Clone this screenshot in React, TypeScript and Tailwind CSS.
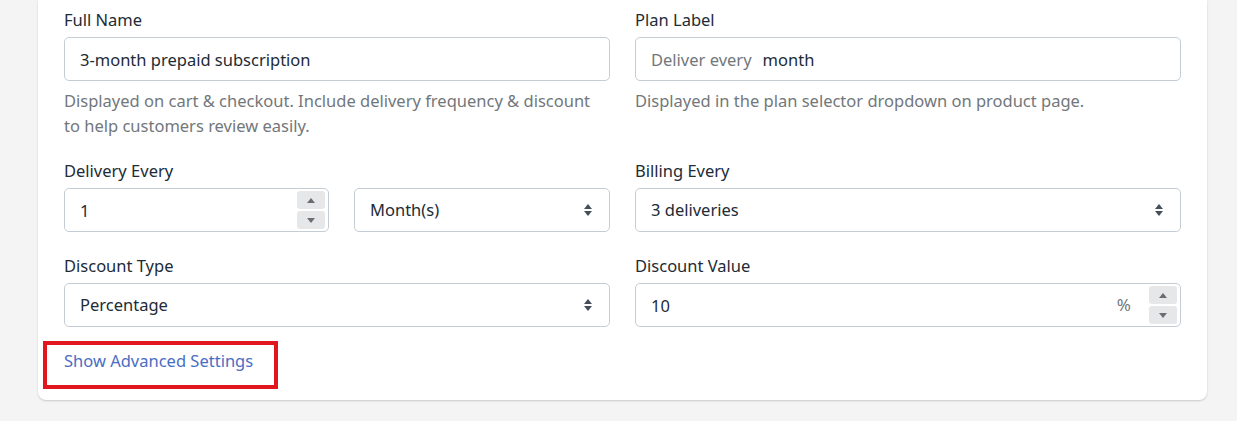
import React from "react";

const font = { fontFamily: '"Segoe UI", "Noto Sans", "Open Sans", sans-serif' };

function Stepper() {
  return (
    <div className="flex flex-col gap-[2px]">
      <div className="flex h-[18px] w-[28px] items-center justify-center rounded-[3px] bg-[#e6e7e9]">
        <svg width="8" height="5" viewBox="0 0 8 5"><path d="M0 5 L4 0 L8 5 Z" fill="#6b6e71" /></svg>
      </div>
      <div className="flex h-[18px] w-[28px] items-center justify-center rounded-[3px] bg-[#e6e7e9]">
        <svg width="8" height="5" viewBox="0 0 8 5"><path d="M0 0 L4 5 L8 0 Z" fill="#6b6e71" /></svg>
      </div>
    </div>
  );
}

function SelectArrows() {
  return (
    <svg width="10" height="14" viewBox="0 0 10 14">
      <path d="M1 6 L5 1 L9 6 Z" fill="#454f5b" />
      <path d="M1 8 L5 13 L9 8 Z" fill="#454f5b" />
    </svg>
  );
}

function Label({ children }: { children: React.ReactNode }) {
  return <div className="mb-[5px] text-[16.5px] leading-[24px] text-[#212b36]">{children}</div>;
}

function Box({ children, right }: { children: React.ReactNode; right?: React.ReactNode }) {
  return (
    <div className="flex h-[44px] items-center rounded-[5px] border border-[#c4cdd5] bg-white pl-[15px] pr-[3px] text-[16.5px] text-[#212b36]">
      <div className="flex-1 pt-[2px]">{children}</div>
      {right}
    </div>
  );
}

function SelectBox({ value }: { value: string }) {
  return (
    <div className="flex h-[44px] items-center rounded-[5px] border border-[#c4cdd5] bg-white pl-[15px] pr-[16px] text-[16.5px] text-[#212b36]">
      <div className="flex-1">{value}</div>
      <SelectArrows />
    </div>
  );
}

export default function App() {
  return (
    <div className="min-h-[421px] w-[1237px] bg-[#f4f4f4]" style={font}>
      <div className="ml-[38px] w-[1169px] rounded-b-[8px] bg-white px-[26px] pb-[27px] pt-[8px] shadow-[0_1px_2px_rgba(0,0,0,0.18)]">
        <div className="grid grid-cols-2 gap-x-[25px]">
          <div>
            <Label>Full Name</Label>
            <Box>3-month prepaid subscription</Box>
            <div className="mt-[7px] text-[16.5px] leading-[25px] text-[#72777b]">
              Displayed on cart &amp; checkout. Include delivery frequency &amp; discount to help customers review easily.
            </div>
          </div>
          <div>
            <Label>Plan Label</Label>
            <Box>
              <span className="text-[#72777b]">Deliver every</span>
              <span className="ml-[11px]">month</span>
            </Box>
            <div className="mt-[7px] text-[16.5px] leading-[25px] text-[#72777b]">
              Displayed in the plan selector dropdown on product page.
            </div>
          </div>
        </div>

        <div className="mt-[21px] grid grid-cols-2 gap-x-[25px]">
          <div>
            <Label>Delivery Every</Label>
            <div className="grid grid-cols-[265px_1fr] gap-x-[25px]">
              <Box right={<Stepper />}>1</Box>
              <SelectBox value="Month(s)" />
            </div>
          </div>
          <div>
            <Label>Billing Every</Label>
            <SelectBox value="3 deliveries" />
          </div>
        </div>

        <div className="mt-[22px] grid grid-cols-2 gap-x-[25px]">
          <div>
            <Label>Discount Type</Label>
            <SelectBox value="Percentage" />
          </div>
          <div>
            <Label>Discount Value</Label>
            <Box
              right={
                <div className="flex items-center">
                  <span className="mr-[18px] text-[17px] text-[#72777b]">%</span>
                  <Stepper />
                </div>
              }
            >
              10
            </Box>
          </div>
        </div>

        <div className="relative mt-[22px]">
          <span className="text-[16.5px] leading-[24px] text-[#4a6dc4]">Show Advanced Settings</span>
          <div className="absolute left-[-21px] top-[-8px] h-[48px] w-[235px] border-[4px] border-[#e0171f]" />
        </div>
      </div>
    </div>
  );
}
